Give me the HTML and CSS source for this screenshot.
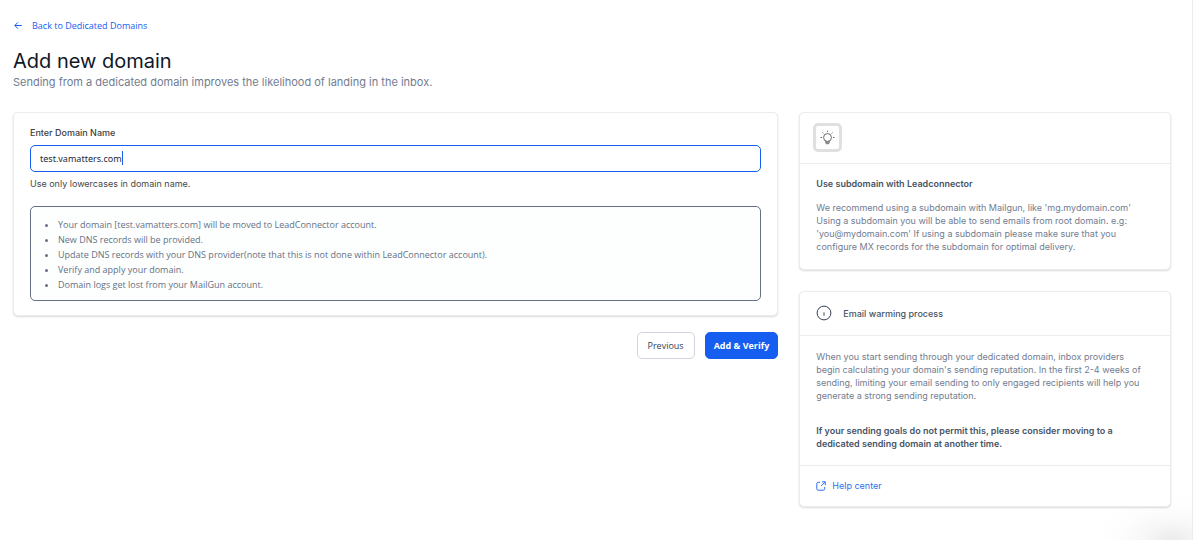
FILE: index.html
```html
<!DOCTYPE html>
<html lang="en">
<head>
<meta charset="utf-8">
<meta name="viewport" content="width=device-width, initial-scale=1">
<title>Add new domain</title>
<link rel="stylesheet" href="styles.css">
</head>
<body>
<main class="page">
  <header class="page-header">
    <a class="back-link" href="#">
      <svg class="icon-back" viewBox="0 0 9 9" aria-hidden="true"><path d="M8.8 4.5H2M4.9 1.4 1.8 4.5l3.1 3.1"/></svg>
      <span>Back to Dedicated Domains</span>
    </a>
    <h1 class="title">Add new domain</h1>
    <p class="subtitle">Sending from a dedicated domain improves the likelihood of landing in the inbox.</p>
  </header>

  <div class="columns">
    <form class="main-column">
      <section class="card form-card">
        <label class="label" for="domain">Enter Domain Name</label>
        <div class="field">
          <input class="input" id="domain" type="text" value="test.vamatters.com" aria-describedby="hint">
          <span class="caret" aria-hidden="true"></span>
        </div>
        <p class="hint" id="hint">Use only lowercases in domain name.</p>
        <ul class="notes">
          <li>Your domain [test.vamatters.com] will be moved to LeadConnector account.</li>
          <li>New DNS records will be provided.</li>
          <li>Update DNS records with your DNS provider(note that this is not done within LeadConnector account).</li>
          <li>Verify and apply your domain.</li>
          <li>Domain logs get lost from your MailGun account.</li>
        </ul>
      </section>
      <div class="actions">
        <button class="button" type="button">Previous</button>
        <button class="button button-primary" type="submit">Add &amp; Verify</button>
      </div>
    </form>

    <aside class="side-column">
      <section class="card">
        <div class="tip-head">
          <span class="tip-icon">
            <svg viewBox="0 0 16 16" aria-hidden="true"><circle cx="8" cy="8" r="4.2"/><path d="M6.2 11.8v2q0 .8.8.8h2q.8 0 .8-.8v-2M6.4 13h3.2M8 .8v1.4M.6 8h1.6M13.8 8h1.6M2.6 2.6l1.1 1.1M13.4 2.6l-1.1 1.1"/></svg>
          </span>
        </div>
        <div class="tip-body">
          <h2 class="card-title">Use subdomain with Leadconnector</h2>
          <p class="text">We recommend using a subdomain with Mailgun, like 'mg.mydomain.com' Using a subdomain you will be able to send emails from root domain. e.g: 'you@mydomain.com' If using a subdomain please make sure that you configure MX records for the subdomain for optimal delivery.</p>
        </div>
      </section>

      <section class="card">
        <div class="warm-head">
          <svg class="icon-info" viewBox="0 0 16 16" aria-hidden="true"><circle cx="8" cy="8" r="6.9"/><path d="M8 7.4v3.2"/></svg>
          <h2 class="card-title">Email warming process</h2>
        </div>
        <div class="warm-body">
          <p class="text">When you start sending through your dedicated domain, inbox providers begin calculating your domain's sending reputation. In the first 2-4 weeks of sending, limiting your email sending to only engaged recipients will help you generate a strong sending reputation.</p>
          <p class="text text-strong">If your sending goals do not permit this, please consider moving to a dedicated sending domain at another time.</p>
        </div>
        <div class="warm-foot">
          <a class="help-link" href="#">
            <svg class="icon-external" viewBox="0 0 10 10" aria-hidden="true"><path d="M4 1.3H2.2Q.8 1.3.8 2.7v5q0 1.5 1.4 1.5h5q1.5 0 1.5-1.5V6M6 .8h3.3V4M9.1 1 5 5.1"/></svg>
            <span>Help center</span>
          </a>
        </div>
      </section>
    </aside>
  </div>
</main>
</body>
</html>
```
FILE: styles.css
```css
* { box-sizing: border-box; }

body {
  margin: 0;
  background: #fff;
  color: #344054;
  font-family: Inter, "Liberation Sans", sans-serif;
  font-size: 9px;
  line-height: 13px;
}

h1, h2, p, ul { margin: 0; }

svg {
  display: block;
  flex: none;
  fill: none;
  stroke: currentColor;
}

a { text-decoration: none; }

.page {
  min-height: 100vh;
  padding: 19px 21px 32px 13px;
  border-right: 1px solid #eaecf0;
  background: radial-gradient(ellipse 76px 46px at calc(100% - 20px) 100%, #ebebeb, #f8f8f8 40%, #fdfdfd 70%, #fff);
}

.page-header { margin-bottom: 22px; }

.back-link {
  display: inline-flex;
  align-items: center;
  gap: 10px;
  color: #155eef;
  font-family: "Open Sans", "Noto Sans", sans-serif;
}

.icon-back { width: 9px; height: 9px; }

.title {
  margin-top: 15px;
  color: #101828;
  font-size: 20px;
  font-weight: 400;
  line-height: 26px;
}

.subtitle {
  color: #737c90;
  font-size: 11px;
  line-height: 16px;
}

.columns {
  display: grid;
  grid-template-columns: 35fr 17fr;
  align-items: start;
  gap: 21px;
}

.card {
  border: 1px solid #eaecf0;
  border-radius: 5px;
  background: #fff;
  box-shadow: 0 1px 2px rgba(16, 24, 40, 0.16);
}

.form-card { padding: 13px 16px 14px; }

.label {
  display: block;
  margin-bottom: 6px;
  color: #404040;
  font-weight: 500;
}

.field { position: relative; }

.input {
  display: block;
  width: 100%;
  height: 27px;
  padding: 0 9px;
  border: 1px solid #155eef;
  border-radius: 5px;
  outline: none;
  background: #fff;
  color: #1d2939;
  font-family: "Noto Sans", "Open Sans", sans-serif;
  font-size: 9px;
}

.caret {
  position: absolute;
  top: 6px;
  left: 92px;
  width: 1px;
  height: 14px;
  background: #155eef;
}

.hint {
  margin-top: 5px;
  color: #484848;
}

.notes {
  margin-top: 16px;
  padding: 10px 16px 8px 27px;
  border: 1px solid #667085;
  border-radius: 5px;
  background: #fcfffe;
  color: #667085;
  font-family: "Open Sans", "Noto Sans", sans-serif;
  line-height: 15px;
}

.actions {
  display: flex;
  justify-content: flex-end;
  gap: 10px;
  margin-top: 16px;
}

.button {
  height: 27px;
  padding: 0 10px;
  border: 1px solid #d0d5dd;
  border-radius: 5px;
  background: #fff;
  color: #344054;
  font-family: "Open Sans", "Noto Sans", sans-serif;
  font-size: 9px;
  font-weight: 500;
}

.button-primary {
  padding: 0 8px;
  border-color: #155eef;
  background: #155eef;
  color: #fff;
  font-weight: 700;
}

.side-column {
  display: grid;
  gap: 21px;
}

.tip-head {
  padding: 10px 13px 11px;
  border-bottom: 1px solid #eaecf0;
}

.tip-icon {
  display: grid;
  place-items: center;
  width: 29px;
  height: 29px;
  border: 3px solid #e0e0e0;
  border-radius: 5px;
  color: #606060;
}

.tip-icon svg { width: 15px; height: 15px; }

.tip-body { padding: 13px 16px 16px; }

.card-title {
  color: #475467;
  font-size: 9px;
  font-weight: 600;
  line-height: 13px;
}

.text { color: #737c90; }

.tip-body .text { margin-top: 11px; }

.warm-head {
  display: flex;
  align-items: center;
  gap: 11px;
  padding: 13px 16px 14px;
  border-bottom: 1px solid #eaecf0;
}

.warm-head .card-title { font-weight: 500; }

.icon-info { width: 16px; height: 16px; }

.warm-body {
  padding: 14px 24px 15px 16px;
  border-bottom: 1px solid #eaecf0;
}

.warm-body .text-strong {
  margin-top: 22px;
  color: #475467;
  font-weight: 600;
}

.warm-foot { padding: 13px 16px 14px; }

.help-link {
  display: flex;
  align-items: center;
  gap: 6px;
  width: fit-content;
  color: #2e6ff2;
}

.icon-external { width: 10px; height: 10px; }
```
